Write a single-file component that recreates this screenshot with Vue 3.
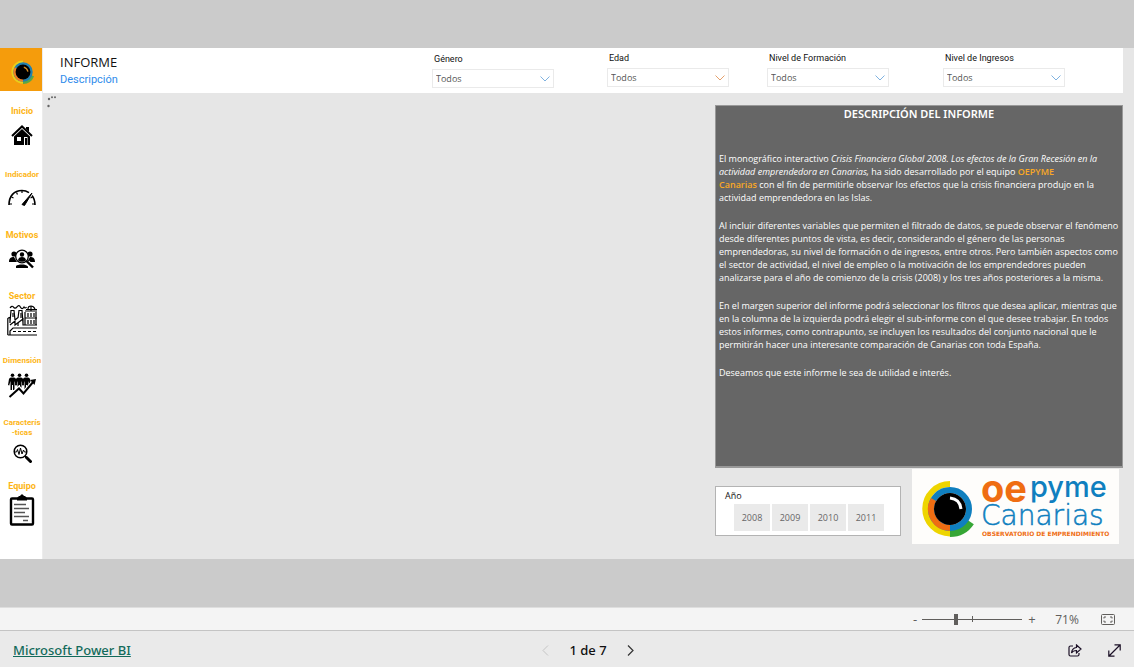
<script setup>
import { ref } from 'vue'

const filters = ref([
  { id: 'genero', label: 'Género', value: 'Todos', low: true },
  { id: 'edad', label: 'Edad', value: 'Todos' },
  { id: 'formacion', label: 'Nivel de Formación', value: 'Todos' },
  { id: 'ingresos', label: 'Nivel de Ingresos', value: 'Todos' }
])
const years = [2008, 2009, 2010, 2011]
const zoom = ref(70)
</script>

<template>
  <div class="viewer">
    <div class="stage">
      <div class="report">
        <nav class="sidebar" aria-label="Secciones">
          <div class="brand">
            <svg width="24" height="26" viewBox="0 0 58 58" aria-hidden="true">
              <path d="M29 4A25 25 0 0 0 29 54" fill="none" stroke="#e9cf1c" stroke-width="6" />
              <path d="M52 38A25 25 0 0 1 29 54" fill="none" stroke="#5aa746" stroke-width="8" />
              <circle cx="29" cy="29" r="20" fill="none" stroke="#2380ae" stroke-width="7" />
              <path d="M12 19A20 20 0 0 0 29 49" fill="none" stroke="#ee7f22" stroke-width="7" />
              <circle cx="29" cy="29" r="18" fill="#000" />
              <path d="M31 17Q39 19 41 28" fill="none" stroke="#d98d22" stroke-width="3" />
            </svg>
          </div>
          <ul class="nav">
            <li><a href="#inicio"><span class="lbl">Inicio</span><span class="ico">
              <svg width="22" height="20" viewBox="0 0 22 20">
                <path d="M1 11L11 1.500L21 11" fill="none" stroke="#000" stroke-width="2" />
                <path d="M15 2h3v5l-3-3z" />
                <path fill-rule="evenodd" d="M3 11.500L11 4l8 7.500V20H3zM6 12h4v4H6zM13 12h3.500v8H13z" />
                <path d="M14 13h2v7h-2z" fill="#000" />
              </svg></span></a></li>
            <li><a href="#indicador"><span class="lbl small">Indicador</span><span class="ico">
              <svg width="28" height="17" viewBox="0 0 28 17" fill="none" stroke="#000">
                <path d="M1 16C1 7 6 1.500 14 1.500c3 0 5 .8 7 2.200M24 6.500c2 2.500 3 5.500 3 9.500" stroke-width="1.600" />
                <path d="M1 15h3M3.500 8l2 1M8.500 3.500l1 2M14 1.500v2.500M24.500 8l-2 1M27 15h-3" stroke-width="1.200" />
                <path d="M14 15.500L24 4L16.500 16.500z" fill="#000" stroke-width="1" />
              </svg></span></a></li>
            <li><a href="#motivos"><span class="lbl">Motivos</span><span class="ico">
              <svg width="26" height="20" viewBox="0 0 26 20">
                <circle cx="5" cy="5" r="2.600" /><circle cx="21" cy="5" r="2.600" />
                <path d="M0 13c0-4 2-5 5-5L8 13zM26 13c0-4-2-5-5-5L18 13zM7 19v-2c1-1 3-1.500 6-1.500s4 .5 6 2V19z" />
                <circle cx="13" cy="7.500" r="6.300" fill="#fff" stroke="#000" stroke-width="1.300" />
                <circle cx="13" cy="5.500" r="2.200" />
                <path d="M9 11.300c0-4.500 8-4.500 8 0-2.300 2-5.700 2-8 0z" />
                <path d="M18.500 13l5.500 5.500" stroke="#fff" stroke-width="4.500" />
                <path d="M17.500 12l6.500 6.500" stroke="#000" stroke-width="2.400" />
              </svg></span></a></li>
            <li><a href="#sector"><span class="lbl">Sector</span><span class="ico">
              <svg width="30" height="31" viewBox="0 0 30 31" fill="none" stroke="#000" stroke-width="1.200">
                <path d="M.8 30V13.500L3 12v6M3 17l1-11.500h3l1 9.500M8 15l3-2.500M11 13l1-7.500h3L16 18M.8 30H30M3 20l5-4v4l8-6v6h14" />
                <path d="M3 3q2-3 3.500-.8t3.500-.4 3.500.4T17 2q1 2 2.500 0M19 4.500h11M21 4c0-2 1-3 3-3s3 1 4 3M24 1v5" />
                <path d="M18 6h12M18 20V7M29 20V7M18 13h12M21 8v4M24 8v4M27 8v4M21 15v4M24 15v4M27 15v4M11 18v3M6 8v4M14 8v5" />
                <path d="M3 30v-4l3-3h24M6 26.500h3M11 26.500h3M16 26.500h3M21 26.500h3M26 26.500h3" />
              </svg></span></a></li>
            <li><a href="#dimension"><span class="lbl small">Dimensión</span><span class="ico">
              <svg width="28" height="25" viewBox="0 0 28 25">
                <g v-for="x in [3, 10, 17]" :key="x" :transform="`translate(${x} 0)`">
                  <circle cx="1.500" cy="2.200" r="1.800" />
                  <path d="M-2 6q.5-1.500 2-1.500h3Q4.500 4.500 5 6l1 6-1.200.5L3.500 8v9H2v-5H1v5H-.5V8l-1.300 4.500L-3 12z" />
                </g>
                <path d="M2 23.500L11 15l5 4.500L25 9" fill="none" stroke="#fff" stroke-width="4" />
                <path d="M1.500 24L11 15.500l4.500 5L25.500 8.500" fill="none" stroke="#000" stroke-width="2" />
                <path d="M22 7l6-1-1.500 6z" />
              </svg></span></a></li>
            <li><a href="#caracteristicas"><span class="lbl small">Caracterís<br>-ticas</span><span class="ico">
              <svg width="19" height="19" viewBox="0 0 19 19" fill="none" stroke="#000">
                <circle cx="7.500" cy="7.500" r="6.300" stroke-width="1.500" />
                <path d="M1.500 8h2l1-2.500 1.500 5L7.500 4 9 10l1.500-4 1 2H13" stroke-width="1" />
                <path d="M12 12l2 2" stroke-width="1.500" /><path d="M13.500 13.500l4 4" stroke-width="3" stroke-linecap="round" />
              </svg></span></a></li>
            <li><a href="#equipo"><span class="lbl">Equipo</span><span class="ico">
              <svg width="26" height="32" viewBox="0 0 26 32">
                <rect x="2" y="4.500" width="22" height="26" rx="1" fill="#fff" stroke="#000" stroke-width="2.400" />
                <path d="M8 6.500V4l2-2h1q2-3.500 4 0h1l2 2v2.500z" />
                <path d="M5 10.500h12M5 14.500h15M5 18.500h11M5 22.500h15M14 26.500h5" stroke="#555" stroke-width="1.500" />
              </svg></span></a></li>
          </ul>
        </nav>

        <div class="page">
          <header class="top">
            <div class="heading">
              <h1>INFORME</h1>
              <h2>Descripción</h2>
            </div>
            <form class="filters">
              <div v-for="f in filters" :key="f.id" class="filter" :class="{ low: f.low }">
                <label :for="f.id">{{ f.label }}</label>
                <div class="pick">
                  <select :id="f.id" v-model="f.value"><option>Todos</option></select>
                  <svg class="chev" :class="f.id" width="10" height="6" viewBox="0 0 10 6" aria-hidden="true"><path d="M.5.5L5 5 9.500.5" /></svg>
                </div>
              </div>
            </form>
          </header>

          <main class="content">
            <svg class="loading" width="10" height="12" viewBox="0 0 10 12" role="img" aria-label="Cargando">
              <circle cx="1.500" cy="10" r="1.200" /><circle cx="2" cy="3" r="1.200" /><circle cx="5" cy="1.200" r="1" /><circle cx="8" cy="1.200" r="1" />
            </svg>
            <div class="right">
              <section class="desc">
                <h3>DESCRIPCIÓN DEL INFORME</h3>
                <p>El monográfico interactivo <i>Crisis Financiera Global 2008. Los efectos de la Gran Recesión en la<br>actividad emprendedora en Canarias,</i> ha sido desarrollado por el equipo <b>OEPYME<br>Canarias</b> con el fin de permitirle observar los efectos que la crisis financiera produjo en la<br>actividad emprendedora en las Islas.</p>
                <p>Al incluir diferentes variables que permiten el filtrado de datos, se puede observar el fenómeno<br>desde diferentes puntos de vista, es decir, considerando el género de las personas<br>emprendedoras, su nivel de formación o de ingresos, entre otros. Pero también aspectos como<br>el sector de actividad, el nivel de empleo o la motivación de los emprendedores pueden<br>analizarse para el año de comienzo de la crisis (2008) y los tres años posteriores a la misma.</p>
                <p>En el margen superior del informe podrá seleccionar los filtros que desea aplicar, mientras que<br>en la columna de la izquierda podrá elegir el sub-informe con el que desee trabajar. En todos<br>estos informes, como contrapunto, se incluyen los resultados del conjunto nacional que le<br>permitirán hacer una interesante comparación de Canarias con toda España.</p>
                <p>Deseamos que este informe le sea de utilidad e interés.</p>
              </section>
              <div class="below">
                <fieldset class="years">
                  <legend>Año</legend>
                  <div class="tiles"><button v-for="y in years" :key="y" type="button">{{ y }}</button></div>
                </fieldset>
                <svg class="oepyme" width="207" height="75" viewBox="0 0 207 75" role="img" aria-label="oepyme Canarias">
                  <rect width="207" height="75" fill="#fefdfb" />
                  <path d="M38 15A24.500 24.500 0 0 0 38 64.500" fill="none" stroke="#eed500" stroke-width="6" />
                  <path d="M58.500 53A24.500 24.500 0 0 1 38 64" fill="none" stroke="#36a635" stroke-width="8" />
                  <circle cx="38" cy="40" r="19" fill="none" stroke="#0f7fbf" stroke-width="6" />
                  <path d="M21.500 30.500A19 19 0 0 0 38 59" fill="none" stroke="#ef6d12" stroke-width="6" />
                  <circle cx="38" cy="40" r="16" />
                  <path d="M38 29q10 1 11 11" fill="none" stroke="#fff" stroke-width="3" />
                  <text x="69" y="33" class="t-oe">oe</text>
                  <text x="118" y="28" class="t-pyme">pyme</text>
                  <text x="69" y="56" class="t-can">Canarias</text>
                  <text x="70" y="67" class="t-obs">OBSERVATORIO DE EMPRENDIMIENTO</text>
                </svg>
              </div>
            </div>
          </main>
        </div>
      </div>
    </div>

    <div class="zoombar">
      <button type="button" aria-label="Alejar">-</button>
      <input v-model="zoom" type="range" min="10" max="190" aria-label="Zoom">
      <button type="button" aria-label="Acercar">+</button>
      <output>71%</output>
      <button type="button" class="fit" aria-label="Ajustar a la página">
        <svg width="14" height="11" viewBox="0 0 14 11" fill="none" stroke="#605e5c">
          <rect x=".5" y=".5" width="13" height="10" rx="1" />
          <path d="M5 3H3v1.500M9 3h2v1.500M5 8H3V6.500M9 8h2V6.500" />
        </svg>
      </button>
    </div>

    <footer class="foot">
      <a class="pbi" href="#powerbi">Microsoft Power BI</a>
      <div class="pager">
        <button type="button" aria-label="Página anterior" disabled>
          <svg width="7" height="11" viewBox="0 0 7 11" fill="none" stroke="#c4c4c4"><path d="M6 .5L1 5.500l5 5" /></svg>
        </button>
        <span>1 de 7</span>
        <button type="button" aria-label="Página siguiente">
          <svg width="7" height="11" viewBox="0 0 7 11" fill="none" stroke="#333" stroke-width="1.200"><path d="M1 .5l5 5-5 5" /></svg>
        </button>
      </div>
      <div class="actions">
        <button type="button" aria-label="Compartir">
          <svg width="14" height="13" viewBox="0 0 14 13" fill="none" stroke="#1b1026" stroke-width="1.200">
            <path d="M5 2H2.500Q1 2 1 3.500v7Q1 12 2.500 12h7q1.500 0 1.500-1.500V9" />
            <path d="M8.500 1l4.500 4-4.500 4V6.500Q5 6.500 3.500 9 4 4 8.500 3.500z" />
          </svg>
        </button>
        <button type="button" aria-label="Pantalla completa">
          <svg width="13" height="13" viewBox="0 0 13 13" fill="none" stroke="#1b1026" stroke-width="1.200"><path d="M1 12L12 1M6.500.8h5.700v5.700M.8 6.500v5.700h5.700" /></svg>
        </button>
      </div>
    </footer>
  </div>
</template>

<style>
body { margin: 0; }
</style>

<style scoped>
.viewer { min-height: 100vh; display: flex; flex-direction: column; font-family: "Open Sans", "Noto Sans", sans-serif; background: #cbcbcb; }
.viewer * { box-sizing: border-box; }
button { border: 0; background: none; padding: 0; font: inherit; color: inherit; display: flex; align-items: center; justify-content: center; }
.stage { flex: 1; padding: 48px 0; display: flex; }
.report { flex: 1; display: flex; background: #e6e6e6; }
.sidebar { width: 43px; background: #fff; border-right: 1px solid #ececec; flex: none; }
.brand { height: 43px; background: #f59c0c; display: flex; align-items: center; justify-content: center; padding: 5px 0 0 4px; }
.nav { list-style: none; margin: 0; padding: 13px 0 0 2px; display: grid; grid-template-rows: 64px 60px 61px 65px 64px 61px 60px; }
.nav a { display: flex; flex-direction: column; align-items: center; text-decoration: none; }
.lbl { color: #fdb515; font-family: Roboto, sans-serif; font-weight: 700; font-size: 9px; line-height: 14px; text-align: center; white-space: nowrap; }
.lbl.small { font-size: 8px; }
.nav li:nth-child(6) .lbl { line-height: 10px; }
.ico { height: 34px; display: flex; align-items: center; }
.nav li:nth-child(2) .ico, .nav li:nth-child(6) .ico { height: 30px; }
.page { flex: 1; min-width: 0; display: flex; flex-direction: column; }
.top { display: flex; justify-content: space-between; background: #fff; height: 45px; margin-right: 11px; padding: 0 58px 0 17px; }
.heading { padding-top: 6px; }
h1, h2 { margin: 0; font-weight: 400; }
h1 { font-size: 13px; line-height: 17px; color: #111; }
h2 { font-family: Roboto, sans-serif; font-size: 11px; line-height: 18px; color: #2f8ceb; }
.filters { display: grid; grid-template-columns: 175px 160px 176px 122px; padding-top: 4px; }
.filter { width: 122px; }
.filter.low { padding-top: 1px; }
.filter label { display: block; font-family: Roboto, sans-serif; font-size: 9px; line-height: 12px; padding-left: 2px; color: #111; white-space: nowrap; }
.pick { position: relative; margin-top: 4px; }
select { appearance: none; display: block; width: 100%; height: 19px; border: 1px solid #eaeaea; background: #fff; border-radius: 0; padding: 0 3px; font: 9px "Open Sans", sans-serif; color: #555; }
.chev { position: absolute; right: 4px; top: 7px; fill: none; stroke: #7fb2e0; }
.chev.edad { stroke: #e5a06b; }
.content { flex: 1; display: flex; justify-content: space-between; align-items: flex-start; padding: 12px 11px 0 4px; }
.loading { fill: #666; margin-top: -9px; }
.right { width: 408px; }
.desc { height: 363px; background: #666; border: 1px solid #999; border-bottom-width: 2px; padding: 0 3px; color: #fff; }
h3 { margin: 0 0 30px; font-family: "Noto Sans", sans-serif; font-size: 11px; line-height: 16px; font-weight: 600; text-align: center; }
.desc p { margin: 0 0 15px; font-size: 9px; line-height: 13px; white-space: nowrap; }
.desc b { color: #f9a825; font-weight: 600; }
.below { display: flex; justify-content: space-between; align-items: flex-start; padding: 1px 4px 0 0; }
.years { margin: 17px 0 0; width: 186px; height: 50px; border: 1px solid #b3b3b3; background: #fff; padding: 3px 0 0 9px; }
.years legend { float: left; width: 100%; padding: 0; font-size: 9px; line-height: 12px; color: #111; }
.tiles { clear: both; display: grid; grid-template-columns: repeat(4, 36px); gap: 2px; padding: 2px 0 0 9px; }
.tiles button { height: 27px; background: #eaeaea; color: #666; font-size: 9px; }
.oepyme { display: block; overflow: visible; }
.oepyme text { font-family: Inter, sans-serif; }
.t-oe { font-size: 38px; font-weight: 700; fill: #ef6d12; }
.t-pyme { font-size: 29px; font-weight: 500; fill: #0f7fbf; }
.oepyme .t-can { font-family: "DejaVu Sans", sans-serif; font-size: 28px; font-weight: 200; fill: #0f7fbf; stroke: #0f7fbf; stroke-width: .5px; }
.oepyme .t-obs { font-family: "DejaVu Sans", sans-serif; font-size: 6px; font-weight: 700; fill: #ef6d12; }
.zoombar { height: 23px; background: #f4f4f4; border-top: 1px solid #dedede; display: flex; align-items: center; justify-content: flex-end; padding-right: 19px; color: #605e5c; font-size: 13px; }
.zoombar button { width: 14px; height: 20px; }
.zoombar input { appearance: none; width: 100px; height: 12px; margin: 0 3px 0 0; background: linear-gradient(#605e5c, #605e5c) 50px 3px / 1px 6px no-repeat, linear-gradient(#605e5c, #605e5c) 0 6px / 100% 1px no-repeat; }
.zoombar input::-webkit-slider-thumb { appearance: none; width: 4px; height: 11px; background: #605e5c; }
.zoombar output { width: 42px; text-align: center; margin: 0 13px 0 7px; font: 12px "Open Sans", sans-serif; }
.foot { height: 37px; background: #eaeaea; border-top: 1px solid #c4c4c4; display: grid; grid-template-columns: 1fr auto 1fr; align-items: center; padding: 2px 13px 0; }
.pbi { color: #126a5a; font-family: "Noto Sans", sans-serif; font-size: 13px; font-weight: 500; }
.pager { display: flex; align-items: center; gap: 20px; font-family: "Noto Sans", sans-serif; font-size: 13px; font-weight: 500; color: #111; margin-left: 42px; }
.actions { display: flex; justify-content: flex-end; gap: 26px; }
</style>
